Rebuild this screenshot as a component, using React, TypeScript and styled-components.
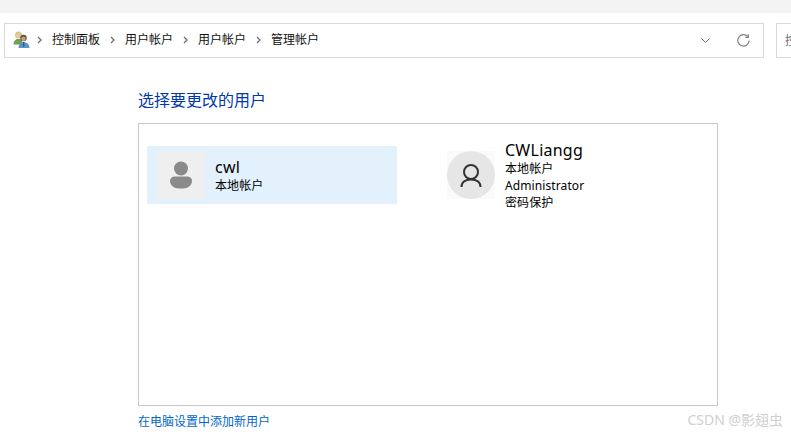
import React from "react";
import styled, { createGlobalStyle } from "styled-components";

const Global = createGlobalStyle`
  html, body { margin: 0; padding: 0; background: #fff; }
  body { font-family: "Noto Sans", "Noto Sans CJK SC", sans-serif; color: #000; overflow: hidden; }
`;
const Page = styled.div`
  position: relative; width: 791px; height: 434px; overflow: hidden; background: #fff;
`;
const TopStrip = styled.div`height: 13px; background: #f3f3f3;`;
const NavRow = styled.div`
  display: flex; gap: 12px; padding: 10px 0 0 4px; width: 900px;
`;
const AddressBar = styled.div`
  box-sizing: border-box; width: 760px; height: 35px; border: 1px solid #d9d9d9;
  display: flex; align-items: center; padding-left: 8px;
`;
const Crumbs = styled.div`
  display: flex; align-items: center; flex: 1; font-size: 12px; color: #111; padding-bottom: 1px;
`;
const Crumb = styled.span<{ $w: number }>`
  line-height: 16px; width: ${p => p.$w}px; white-space: nowrap;
`;
const Sep = styled.svg`
  width: 5px; height: 8px; margin-right: 10px; flex: none;
`;
const Controls = styled.div`
  display: flex; align-items: center; gap: 27px; padding-right: 13px;
`;
const SearchBox = styled.div`
  box-sizing: border-box; width: 100px; height: 35px; border: 1px solid #d9d9d9;
  display: flex; align-items: center; padding: 0 0 1px 8px; font-size: 12px; color: #6d6d6d; white-space: nowrap;
`;
const Content = styled.main`
  display: flex; flex-direction: column; margin-left: 138px; width: 580px;
`;
const Heading = styled.h1`
  margin: 31px 0 0; font-weight: 400; font-size: 16px; line-height: 22px; color: #0038a8;
`;
const Panel = styled.section`
  box-sizing: border-box; width: 580px; height: 283px; margin-top: 12px;
  border: 1px solid #c8c8c8; padding: 22px 8px 0; display: flex; gap: 40px; align-items: flex-start;
`;
const Tile = styled.div<{ $selected?: boolean }>`
  box-sizing: border-box; width: 250px; height: 58px; display: flex; align-items: center;
  padding-left: 10px; gap: 10px; border-radius: 1px;
  background: ${p => (p.$selected ? "#e3f1fc" : "transparent")};
`;
const Avatar = styled.div<{ $round?: boolean }>`
  width: 48px; height: 48px; flex: none; background: ${p => (p.$round ? "#fafbf9" : "#efefef")};
  display: flex; align-items: center; justify-content: center;
`;
const Info = styled.div`display: flex; flex-direction: column;`;
const Name = styled.div`
  font-size: 16px; line-height: 20px; color: #000; letter-spacing: 0.25px;
`;
const Sub = styled.div`
  font-size: 12px; line-height: 17px; color: #000; letter-spacing: 0.1px;
`;
const AddLink = styled.a`
  margin-top: 7px; font-size: 12px; line-height: 18px; color: #0066cc; text-decoration: none;
`;
const Watermark = styled.div`
  position: absolute; right: 8px; top: 410px; font-size: 14px; line-height: 20px; color: #d0d0d0;
`;

const Chevron = () => (
  <Sep viewBox="0 0 5 8"><path d="M1 1l3 3-3 3" fill="none" stroke="#6e6e6e" strokeWidth="1.3" /></Sep>
);

const UsersIcon = () => (
  <svg width="17" height="17" viewBox="0 0 17 17" style={{ marginRight: 7, flex: "none", marginBottom: 2 }}>
    <circle cx="5.500" cy="4" r="3.500" fill="#d9c48c" />
    <circle cx="5.500" cy="4.800" r="2.300" fill="#e6c9a6" />
    <path d="M0.500 13.500c0-3.500 2-5.500 5-5.500s4 2 4 5.500z" fill="#6fa050" />
    <circle cx="10.500" cy="7" r="3.200" fill="#5b4a3c" />
    <circle cx="10.500" cy="7.800" r="2.200" fill="#c99f7c" />
    <path d="M5.500 17c0-3.700 2-6 5-6s6 2.300 6 6z" fill="#5f94c8" />
    <path d="M10 11h1.200l.3 4-.9 1-.9-1z" fill="#2f5f8f" />
  </svg>
);

export default function App() {
  return (
    <Page>
      <Global />
      <TopStrip />
      <NavRow>
        <AddressBar>
          <UsersIcon />
          <Crumbs>
            <Chevron />
            <Crumb $w={58}>控制面板</Crumb>
            <Chevron />
            <Crumb $w={58}>用户帐户</Crumb>
            <Chevron />
            <Crumb $w={58}>用户帐户</Crumb>
            <Chevron />
            <Crumb $w={60}>管理帐户</Crumb>
          </Crumbs>
          <Controls>
            <svg width="9" height="5" viewBox="0 0 9 5"><path d="M0.500 0.500L4.500 4.500l4-4" fill="none" stroke="#666" strokeWidth="1" /></svg>
            <svg width="13" height="13" viewBox="0 0 13 13"><path d="M10.800 2.600A5.700 5.700 0 1 0 12.200 6.500" fill="none" stroke="#808080" strokeWidth="1.200" /><path d="M11.300 0.300v3H8.300" fill="none" stroke="#808080" strokeWidth="1.200" /></svg>
          </Controls>
        </AddressBar>
        <SearchBox>控制面板</SearchBox>
      </NavRow>
      <Content>
        <Heading>选择要更改的用户</Heading>
        <Panel>
          <Tile $selected>
            <Avatar>
              <svg width="24" height="29" viewBox="0 0 24 29">
                <circle cx="12" cy="7.500" r="7" fill="#8a8a8a" />
                <path d="M1 20c0-3 2-4.500 5-4.500h12c3 0 5 1.500 5 4.500 0 4-4 7.500-9 7.500h-4c-5 0-9-3.500-9-7.500z" fill="#8a8a8a" />
              </svg>
            </Avatar>
            <Info>
              <Name>cwl</Name>
              <Sub>本地帐户</Sub>
            </Info>
          </Tile>
          <Tile>
            <Avatar $round>
              <svg width="48" height="48" viewBox="0 0 48 48">
                <circle cx="24" cy="24" r="24" fill="#e6e6e6" />
                <circle cx="24" cy="21" r="7" fill="none" stroke="#333" strokeWidth="2" />
                <path d="M14.500 36c0-5 4-7.500 9.500-7.500s9.500 2.500 9.500 7.500" fill="none" stroke="#333" strokeWidth="2" />
              </svg>
            </Avatar>
            <Info>
              <Name>CWLiangg</Name>
              <Sub>本地帐户</Sub>
              <Sub>Administrator</Sub>
              <Sub>密码保护</Sub>
            </Info>
          </Tile>
        </Panel>
        <AddLink href="#">在电脑设置中添加新用户</AddLink>
      </Content>
      <Watermark>CSDN @影翅虫</Watermark>
    </Page>
  );
}
